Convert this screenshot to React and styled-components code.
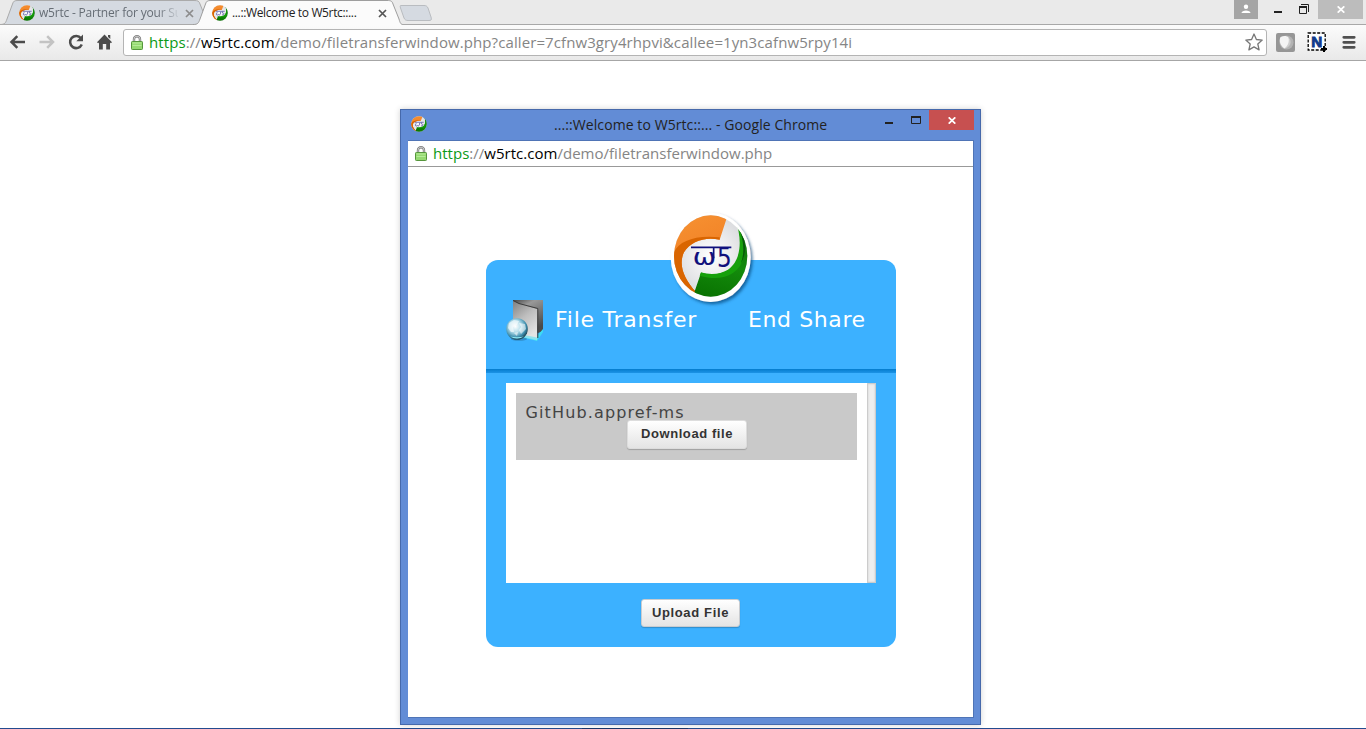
import React from "react";
import styled, { createGlobalStyle, css } from "styled-components";

const UI = `"Open Sans", "Noto Sans", sans-serif`;

const GlobalStyle = createGlobalStyle`
  * { box-sizing: border-box; }
  body { margin: 0; background: #fff; overflow: hidden; }
`;

const Desktop = styled.div`
  position: relative;
  display: flex;
  flex-direction: column;
  height: 729px;
  background: #fff;
  font-family: ${UI};
`;

const TabStrip = styled.header`
  display: flex;
  height: 25px;
  padding-left: 0;
  background: #eaeaea;
  border-bottom: 1px solid #a8a8a8;
`;

const Tab = styled.div`
  position: relative;
  display: flex;
  align-items: center;
  flex: none;
  width: 210px;
  height: 25px;
  margin-right: -17px;
  padding-left: 19px;
  z-index: ${(p) => (p.$active ? 2 : 1)};
  color: ${(p) => (p.$active ? "#222" : "#666d75")};
`;

const TabShape = styled.svg`
  position: absolute;
  left: 0;
  top: 0;
  width: 210px;
  height: 25px;
`;

const TabTitle = styled.span`
  position: relative;
  flex: none;
  width: 139px;
  margin: 1px 0 0 4px;
  white-space: nowrap;
  font-size: 12px;
  line-height: 18px;
  letter-spacing: ${(p) => p.$spacing};
  ${(p) =>
    p.$fade &&
    css`
      mask-image: linear-gradient(to right, #000 118px, transparent 142px);
    `}
`;

const TabClose = styled.svg`
  position: relative;
  width: 9px;
  height: 9px;
  margin: 2px 0 0 7px;
`;

const NewTab = styled.svg`
  flex: none;
  width: 36px;
  height: 18px;
  margin: 4px 0 0 12px;
`;

const FrameControls = styled.div`
  display: flex;
  margin-left: auto;
  padding-right: 3px;
`;

const FrameButton = styled.div`
  display: flex;
  align-items: center;
  justify-content: center;
  width: ${(p) => p.$w}px;
  height: 19px;
  margin-right: ${(p) => p.$gap || 0}px;
  background: ${(p) => p.$bg || "transparent"};
`;

const Toolbar = styled.nav`
  display: flex;
  align-items: center;
  height: 36px;
  padding: 0 9px 1px;
  background: linear-gradient(#fbfbfb, #e9e9e9);
  border-bottom: 1px solid #a6a6a6;
`;

const NavIcon = styled.svg`
  flex: none;
  width: 18px;
  height: 18px;
  margin-right: ${(p) => p.$gap}px;
`;

const Omnibox = styled.div`
  display: flex;
  align-items: center;
  width: 1144px;
  height: 27px;
  padding: 0 3px 0 7px;
  background: #fff;
  border: 1px solid #b4b4b4;
  border-radius: 3px;
`;

const Url = styled.div`
  flex: 1;
  margin-left: ${(p) => p.$ml}px;
  font-size: 15px;
  line-height: 22px;
  letter-spacing: ${(p) => p.$spacing}px;
  white-space: nowrap;
  color: #858585;
  b { font-weight: 400; color: #0b9a18; }
  em { font-style: normal; color: #000; }
`;

const Extensions = styled.div`
  display: flex;
  align-items: center;
  gap: 12px;
  margin-left: 9px;
`;

const Popup = styled.section`
  position: absolute;
  left: 400px;
  top: 109px;
  display: flex;
  flex-direction: column;
  width: 581px;
  height: 616px;
  padding: 0 7px 6px;
  background: #628cd6;
  border: 1px solid #4669ab;
  box-shadow: 0 0 6px rgba(0, 0, 0, 0.18);
`;

const TitleBar = styled.header`
  display: flex;
  height: 30px;
  padding-left: 2px;
`;

const PopupTitle = styled.span`
  width: 278px;
  margin: 4px 0 0 127px;
  white-space: nowrap;
  font-size: 14px;
  line-height: 22px;
  letter-spacing: 0.08px;
  color: #222;
`;

const PopupControls = styled.div`
  display: flex;
  margin-left: auto;
  margin-right: -1px;
`;

const CloseBox = styled.div`
  display: flex;
  align-items: center;
  justify-content: center;
  width: 45px;
  height: 20px;
  background: #c75050;
`;

const Glyph = styled.svg`
  flex: none;
  width: ${(p) => p.$w}px;
  height: ${(p) => p.$h}px;
  margin: ${(p) => p.$m || 0};
`;

const PopupBody = styled.div`
  display: flex;
  flex-direction: column;
  flex: 1;
  background: #fff;
  border: 1px solid #4f74b6;
  border-width: 1px 1px 1px 0;
  margin-right: -1px;
`;

const AddressBar = styled.div`
  display: flex;
  align-items: center;
  height: 26px;
  padding: 0 0 1px 7px;
  border-bottom: 1px solid #999;
`;

const Card = styled.main`
  position: relative;
  display: flex;
  flex-direction: column;
  width: 410px;
  height: 387px;
  margin: 93px 0 0 78px;
  background: #3cb1ff;
  border-radius: 12px;
  font-family: "DejaVu Sans", sans-serif;
`;

const Logo = styled.svg`
  position: absolute;
  left: 174px;
  top: -55px;
  width: 100px;
  height: 105px;
`;

const CardHeader = styled.div`
  display: flex;
  height: 113px;
  padding: 39px 0 0 19px;
  background: linear-gradient(#047ccd, #1c93e6) bottom / 100% 4px no-repeat;
`;

const Heading = styled.h1`
  margin: 7px 0 0 ${(p) => p.$ml}px;
  width: ${(p) => p.$w}px;
  font-size: 22px;
  font-weight: 400;
  line-height: 28px;
  letter-spacing: ${(p) => p.$spacing}px;
  white-space: nowrap;
  color: #fff;
`;

const FileList = styled.div`
  display: flex;
  width: 370px;
  height: 200px;
  margin: 10px 0 0 20px;
  background: #fff;
`;

const FileItem = styled.div`
  display: flex;
  flex-direction: column;
  width: 341px;
  height: 67px;
  margin: 10px;
  background: #c9c9c9;
`;

const FileName = styled.span`
  height: 27px;
  padding: 9px 0 0 9.5px;
  font-size: 16px;
  line-height: 22px;
  letter-spacing: 1.13px;
  color: #444;
`;

const ScrollTrack = styled.div`
  width: 9px;
  height: 200px;
  background: #eee;
  border: 1px solid #ccc;
  box-shadow: inset 0 0 2px rgba(0, 0, 0, 0.15);
`;

const Button = styled.button`
  align-self: center;
  width: ${(p) => p.$w}px;
  height: ${(p) => p.$h}px;
  margin: ${(p) => p.$m};
  padding: 0 0 2px;
  border: 1px solid ${(p) => p.$edge};
  border-radius: 3px;
  background: linear-gradient(#fff, #e4e4e4);
  box-shadow: 0 1px 1px rgba(0, 0, 0, 0.2);
  font: bold 13px "Liberation Sans", Arial, sans-serif;
  letter-spacing: ${(p) => p.$spacing}px;
  white-space: nowrap;
  color: #333;
`;

const Taskbar = styled.footer`
  height: 1px;
  margin-top: auto;
  background: linear-gradient(to right, #234b8f 582px, #18366b 582px, #18366b 688px, #234b8f 688px);
`;

function Emblem({ id }) {
  return (
    <>
      <defs>
        <linearGradient id={`${id}o`} x1="0" y1="0" x2="0.3" y2="1">
          <stop offset="0" stopColor="#f79433" />
          <stop offset="0.45" stopColor="#f3872a" />
          <stop offset="1" stopColor="#dd6800" />
        </linearGradient>
        <linearGradient id={`${id}g`} x1="0.6" y1="0" x2="0.4" y2="1">
          <stop offset="0" stopColor="#0c6510" />
          <stop offset="0.55" stopColor="#148b0c" />
          <stop offset="1" stopColor="#087000" />
        </linearGradient>
        <radialGradient id={`${id}w`}>
          <stop offset="0" stopColor="#ffffff" />
          <stop offset="1" stopColor="#d9dadd" />
        </radialGradient>
        <clipPath id={`${id}c`}>
          <ellipse cx="152" cy="153" rx="110" ry="122" />
        </clipPath>
      </defs>
      <g clipPath={`url(#${id}c)`}>
        <rect x="35" y="25" width="235" height="255" fill={`url(#${id}w)`} />
        <path
          d="M202 20 L200 40 L179 104 C135 94 92 109 72 142 C55 178 70 220 109 262 L80 290 L20 200 L20 20 Z"
          fill={`url(#${id}o)`}
        />
        <path
          d="M38 153 C46 113 98 88 179 97 L179 104 C135 94 92 109 72 142 C55 178 70 220 109 262 L97 258 C55 225 36 190 38 153 Z"
          fill="#d96500"
        />
        <path
          d="M226 40 C250 100 247 170 204 196 C181 210 151 212 123 203 L103 262 L130 300 L290 260 L280 30 Z"
          fill={`url(#${id}g)`}
        />
        <path
          d="M226 45 C247 100 245 166 204 194 C181 208 151 210 123 202 L119 212 C155 222 188 222 214 207 C260 180 266 125 226 45 Z"
          fill="#16a00b"
        />
        <path d="M228 47 C258 93 263 142 243 174 C257 136 249 90 228 47 Z" fill="#07570a" />
      </g>
    </>
  );
}

function Mark() {
  return (
    <g fill="#10107c" stroke="#10107c">
      <path d="M93 127H214M161 128V160" strokeWidth="5" fill="none" />
      <text x="98" y="179" fontFamily="DejaVu Sans" fontSize="68" strokeWidth="0.3" textLength="70" lengthAdjust="spacingAndGlyphs">ω</text>
      <text x="171" y="185" fontFamily="DejaVu Sans" fontSize="80" strokeWidth="0.3" textLength="44" lengthAdjust="spacingAndGlyphs">5</text>
    </g>
  );
}

const Fav = styled.svg`
  position: relative;
  flex: none;
  width: 16px;
  height: 16px;
  margin: ${(p) => p.$m || 0};
`;

function Favicon({ id, m }) {
  return (
    <Fav viewBox="39 28 226 250" preserveAspectRatio="none" $m={m}>
      <Emblem id={id} />
      <path
        d="M92 126H218M113 142C91 176 106 196 132 178C148 192 162 177 160 135M184 130V151C214 149 218 184 180 183"
        fill="none"
        stroke="#303092"
        strokeWidth="12"
        opacity="0.8"
      />
    </Fav>
  );
}

function Lock() {
  return (
    <Glyph viewBox="0 0 12 15" $w={12} $h={15}>
      <path d="M3 7V4.2a3 3 0 0 1 6 0V7" fill="none" stroke="#7d7d7d" strokeWidth="2.4" />
      <path d="M3 7V4.2a3 3 0 0 1 6 0V7" fill="none" stroke="#ddd" strokeWidth="0.8" />
      <rect x="0.5" y="6.5" width="11" height="8" rx="0.8" fill="#95d971" stroke="#55953c" />
      <path d="M1.5 8h9M1.5 10.5h9" stroke="#b6ec99" />
    </Glyph>
  );
}

function Chrome() {
  return (
    <>
      <TabStrip>
        <Tab>
          <TabShape viewBox="0 0 210 25">
            <path d="M0 24.5C5 24.5 5.500 23 7 19L12.500 4C13.500 1 14.500 .5 18 .5H194C198 .5 199 1 200 4L206 19C207 23 208 24.500 210 24.500Z" fill="#d5dae1" stroke="#aaa" />
          </TabShape>
          <Favicon id="a" m="1px 0 0 0" />
          <TabTitle $fade $spacing="-0.2px">w5rtc - Partner for your Su</TabTitle>
          <TabClose viewBox="0 0 9 9">
            <path d="M1 1L8 8M8 1L1 8" stroke="#8c8c8c" strokeWidth="1.7" />
          </TabClose>
        </Tab>
        <Tab $active>
          <TabShape viewBox="0 0 210 25">
            <path d="M0 24.500C5 24.500 5.500 23 7 19L12.500 4C13.500 1 14.500 .5 18 .5H194C198 .5 199 1 200 4L206 19C207 23 208 24.500 210 24.500V25H0Z" fill="#fbfbfb" />
            <path d="M0 24.500C5 24.500 5.500 23 7 19L12.500 4C13.500 1 14.500 .5 18 .5H194C198 .5 199 1 200 4L206 19C207 23 208 24.500 210 24.500" fill="none" stroke="#9e9e9e" />
          </TabShape>
          <Favicon id="b" m="1px 0 0 0" />
          <TabTitle $spacing="-0.36px">...::Welcome to W5rtc::...</TabTitle>
          <TabClose viewBox="0 0 9 9">
            <path d="M1 1L8 8M8 1L1 8" stroke="#555" strokeWidth="1.7" />
          </TabClose>
        </Tab>
        <NewTab viewBox="0 0 36 18">
          <path d="M3 1.500H26C28 1.500 29 2 30 4L33 13C34 16 33 16.500 31 16.500H10C8 16.500 7 16 6 14L2.500 4C2 2 2 1.500 3 1.500Z" fill="#d5dae1" stroke="#b9bcc0" />
        </NewTab>
        <FrameControls>
          <FrameButton $w={24} $gap={12} $bg="#a5a5a5">
            <Glyph viewBox="0 0 10 10" $w={10} $h={10} $m="0 0 2px">
              <circle cx="5" cy="2.800" r="2.200" fill="#fff" />
              <path d="M0.500 9C0.500 5.500 9.500 5.500 9.500 9Z" fill="#fff" />
            </Glyph>
          </FrameButton>
          <FrameButton $w={16} $gap={10}>
            <Glyph viewBox="0 0 8 3" $w={8} $h={3} $m="6px 0 0">
              <rect width="8" height="2" y="0" fill="#222" />
            </Glyph>
          </FrameButton>
          <FrameButton $w={16} $gap={6}>
            <Glyph viewBox="0 0 10 10" $w={10} $h={10} $m="0 0 1px">
              <path d="M2 .5H9.500V8" fill="none" stroke="#222" />
              <path d="M.5 3V9.500H7.500V3" fill="none" stroke="#222" />
              <rect y="2" width="8" height="2" fill="#222" />
            </Glyph>
          </FrameButton>
          <FrameButton $w={45} $bg="#bcbcbc">
            <Glyph viewBox="0 0 8 7" $w={8} $h={7}>
              <path d="M.7 .3L7.300 6.700M7.300 .3L.7 6.700" stroke="#fff" strokeWidth="1.700" />
            </Glyph>
          </FrameButton>
        </FrameControls>
      </TabStrip>
      <Toolbar>
        <NavIcon viewBox="0 0 18 18" $gap={11}>
          <path d="M16 9H3M8.300 3.200L2.500 9L8.300 14.800" fill="none" stroke="#4c4c4c" strokeWidth="2.500" />
        </NavIcon>
        <NavIcon viewBox="0 0 18 18" $gap={11}>
          <path d="M1.500 9H14.500M9.200 3.200L15 9L9.200 14.800" fill="none" stroke="#c3c3c3" strokeWidth="2.500" />
        </NavIcon>
        <NavIcon viewBox="0 0 18 18" $gap={11}>
          <path d="M14 5.200A6.100 6.100 0 1 0 14.800 11.500" fill="none" stroke="#4c4c4c" strokeWidth="2.500" />
          <path d="M16 1.500V8.300H9.300Z" fill="#4c4c4c" />
        </NavIcon>
        <NavIcon viewBox="0 0 18 18" $gap={9}>
          <path d="M8.500 1.500L16 9.200L14.800 10.300L14 9.500V16.500H10.200V11H6.800V16.500H3V9.500L2.200 10.300L1 9.200ZM12 2H14.300V6L12 4Z" fill="#4c4c4c" />
        </NavIcon>
        <Omnibox>
          <Lock />
          <Url $ml={6} $spacing={0.095}>
            <b>https</b>://<em>w5rtc.com</em>/demo/filetransferwindow.php?caller=7cfnw3gry4rhpvi&amp;callee=1yn3cafnw5rpy14i
          </Url>
          <Glyph viewBox="0 0 18 18" $w={18} $h={18}>
            <path d="M9 1L11.400 6.500L17.200 7.100L12.800 11L14.100 16.900L9 13.900L3.900 16.900L5.200 11L.8 7.100L6.600 6.500Z" fill="#fff" stroke="#777" strokeWidth="1.300" strokeLinejoin="round" />
          </Glyph>
        </Omnibox>
        <Extensions>
          <Glyph viewBox="0 0 19 19" $w={19} $h={19}>
            <rect width="19" height="19" rx="2" fill="#969696" />
            <circle cx="10.500" cy="9.500" r="7" fill="#b3b3b3" />
            <path d="M4.500 4C8 2.500 11 3 12.500 4.500C15 9 12 14 8.500 15.500C4.500 13 2.500 8 4.500 4Z" fill="#f4f4f4" />
            <path d="M12.500 4.500C17 8 14 15 8.500 15.500C12 13 13.500 9 12.500 4.500Z" fill="#cdcdcd" />
          </Glyph>
          <Glyph viewBox="0 0 20 20" $w={20} $h={20}>
            <rect x="1.200" y="1" width="17" height="17" fill="#fff" stroke="#000" strokeWidth="1.300" strokeDasharray="3 1.500" />
            <text x="4.200" y="14.500" fontFamily="Liberation Sans" fontSize="15.500" fontWeight="bold" fill="#123a8a" stroke="#123a8a" strokeWidth=".9" textLength="11" lengthAdjust="spacingAndGlyphs">N</text>
            <path d="M14 17H20M17 14V20" stroke="#000" strokeWidth="2" />
          </Glyph>
          <Glyph viewBox="0 0 14 14" $w={14} $h={14} $m="0 0 0 3px">
            <path d="M1.800 2.300H12.200M1.800 7.300H12.200M1.800 12.300H12.200" stroke="#505050" strokeWidth="2.800" strokeLinecap="round" />
          </Glyph>
        </Extensions>
      </Toolbar>
    </>
  );
}

function FolderIcon() {
  return (
    <Glyph viewBox="0 0 40 44" $w={40} $h={44}>
      <defs>
        <linearGradient id="fb" x2="0.5" y2="1"><stop stopColor="#444" /><stop offset=".3" stopColor="#999" /><stop offset="1" stopColor="#4a4a4a" /></linearGradient>
        <linearGradient id="ff" x2="0.5" y2="1"><stop stopColor="#808080" /><stop offset=".5" stopColor="#bdbdbd" /><stop offset="1" stopColor="#e4e4e4" /></linearGradient>
        <radialGradient id="gl" cx=".42" cy=".38" r=".62"><stop stopColor="#fff" /><stop offset=".45" stopColor="#b2dcea" /><stop offset=".8" stopColor="#3f8fae" /><stop offset="1" stopColor="#1e4a5c" /></radialGradient>
      </defs>
      <path d="M8 1H38V32L33 34L8 22Z" fill="url(#fb)" />
      <path d="M16 38L32 42L38 33V30L32 37Z" fill="#3ddcf3" />
      <path d="M8 2L14 5L32.500 10L32 41L19 38L8 35Z" fill="url(#ff)" />
      <path d="M19 36L32 38.500V41.500L17 38.500Z" fill="#6fe3f2" opacity=".7" />
      <path d="M8.200 1.500L14 4.500L32.800 9.500V39" fill="none" stroke="#3c3c3c" strokeWidth="1" />
      <ellipse cx="14" cy="40" rx="8" ry="1.700" fill="#225d7a" opacity=".4" />
      <circle cx="12" cy="30" r="10.800" fill="url(#gl)" />
      <path d="M4 24L9 21L14 22L12 26L8 28L9 33L6 33L3 29ZM14 24L20 25L21 30L16 35L14 31L16 28ZM9 34L13 33L12 37Z" fill="#fff" opacity=".55" />
      <path d="M5 37.500Q12 41.500 19 37.500Q12 39 5 37.500" fill="#8feaf7" />
    </Glyph>
  );
}

function FileWindow() {
  return (
    <Popup>
      <TitleBar>
        <Favicon id="p" m="6px 0 0 1px" />
        <PopupTitle>...::Welcome to W5rtc::... - Google Chrome</PopupTitle>
        <PopupControls>
          <Glyph viewBox="0 0 8 2" $w={8} $h={2} $m="12px 18px 0 0"><rect width="8" height="2" fill="#222" /></Glyph>
          <Glyph viewBox="0 0 10 8" $w={10} $h={8} $m="6px 8px 0 0"><path d="M.5 1V7.500H9.500V1" fill="none" stroke="#222" strokeWidth="1" /><rect width="10" height="2" fill="#222" /></Glyph>
          <CloseBox>
            <Glyph viewBox="0 0 8 7" $w={8} $h={7} $m="1px 0 0"><path d="M.7 .3L7.300 6.700M7.300 .3L.7 6.700" stroke="#fff" strokeWidth="1.700" /></Glyph>
          </CloseBox>
        </PopupControls>
      </TitleBar>
      <PopupBody>
        <AddressBar>
          <Lock />
          <Url $ml={6} $spacing={0.02}><b>https</b>://<em>w5rtc.com</em>/demo/filetransferwindow.php</Url>
        </AddressBar>
        <Card>
          <CardHeader>
            <FolderIcon />
            <Heading $ml={10} $w={193} $spacing={0.75}>File Transfer</Heading>
            <Heading $ml={0} $w={130} $spacing={0.6}>End Share</Heading>
          </CardHeader>
          <Logo viewBox="0 0 300 315">
            <defs><filter id="sh" x="-20%" y="-20%" width="150%" height="150%"><feDropShadow dx="6" dy="7" stdDeviation="5" floodColor="#003e70" floodOpacity=".65" /></filter></defs>
            <ellipse cx="152" cy="157" rx="120" ry="134" fill="#fff" filter="url(#sh)" />
            <Emblem id="l" />
            <Mark />
          </Logo>
          <FileList>
            <FileItem>
              <FileName>GitHub.appref-ms</FileName>
              <Button $w={120} $h={29} $m="0 0 0 1px" $edge="#ddd" $spacing={0.58}>Download file</Button>
            </FileItem>
            <ScrollTrack />
          </FileList>
          <Button $w={99} $h={28} $m="16px 0 0 -1px" $edge="#c9ccd0" $spacing={0.65}>Upload File</Button>
        </Card>
      </PopupBody>
    </Popup>
  );
}

export default function App() {
  return (
    <Desktop>
      <GlobalStyle />
      <Chrome />
      <FileWindow />
      <Taskbar />
    </Desktop>
  );
}
